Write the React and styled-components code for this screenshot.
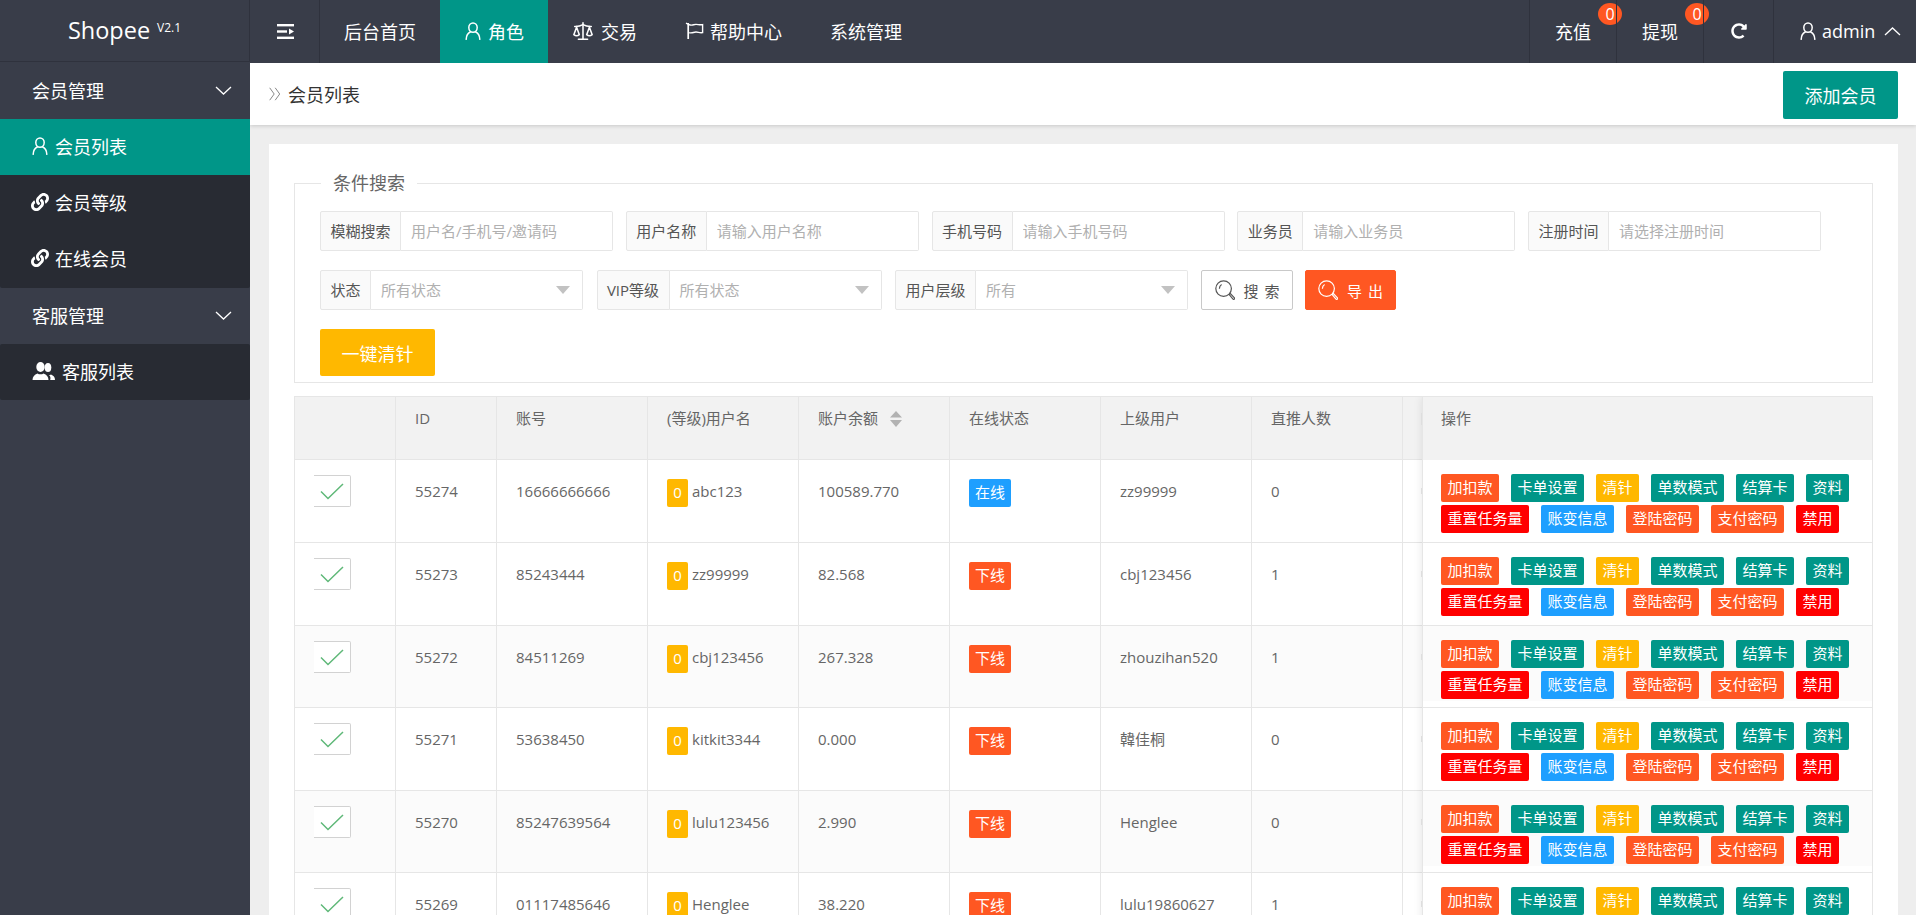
import React from 'react';
import styled, { createGlobalStyle } from 'styled-components';
import { FaLink, FaRedoAlt } from 'react-icons/fa';
import { Scale } from 'lucide-react';

const C = { dark: '#393D49', deep: '#282B33', teal: '#009688', orange: '#FF5722', yellow: '#FFB800', red: '#FF0000', blue: '#1E9FFF', line: '#e6e6e6' };

const Global = createGlobalStyle`
  html, body { margin: 0; padding: 0; height: 100%; overflow: hidden; }
  body { font-family: "Open Sans", "Noto Sans CJK SC", sans-serif; background: #eeeeee; color: #666; }
  * { box-sizing: border-box; }
`;

const Page = styled.div`display: flex; flex-direction: column; height: 100vh; overflow: hidden;`;
const TopBar = styled.header`display: flex; height: 63px; flex: none; background: ${C.dark}; color: #fff; font-size: 18px;`;
const Logo = styled.div`
  width: 250px; height: 62px; flex: none; display: flex; align-items: flex-start; justify-content: center;
  border-right: 1px solid #2f323d; border-bottom: 1px solid #2f323d; padding: 13px 0 0 0; font-size: 23.5px; line-height: 34px;
  sup { font-size: 12px; line-height: 12px; margin: 9px 0 0 7px; }
`;
const MenuToggle = styled.div`width: 70px; flex: none; display: flex; align-items: center; justify-content: center; border-right: 1px solid #2f323d; padding-left: 1px;`;
const NavItem = styled.div`
  height: 63px; padding: 0 24px 1px; display: flex; align-items: center; gap: ${p => p.$gap || 6}px;
  background: ${p => p.$active ? C.teal : 'transparent'};
`;
const NavRight = styled.div`margin-left: auto; display: flex;`;
const RightItem = styled.div`
  position: relative; width: ${p => p.$w}px; display: flex; align-items: center; justify-content: ${p => p.$center ? 'center' : 'flex-start'};
  border-left: 1px solid #2f323d; padding: 0 0 1px ${p => p.$center ? 0 : 25}px;
`;
const Dot = styled.span`
  position: absolute; left: 68px; top: 3px; width: 24px; height: 22px; border-radius: 50%; background: ${C.orange};
  font-size: 16px; line-height: 22px; text-align: center; color: #fff;
`;
const AdminName = styled.span`margin: 0 9px 0 5px;`;

const Body = styled.div`display: flex; flex: 1; min-height: 0;`;
const Side = styled.aside`width: 250px; flex: none; background: ${C.dark}; color: #fff; font-size: 18px;`;
const SideHead = styled.div`height: 56px; display: flex; align-items: center; justify-content: space-between; padding: 0 18px 2px 32px;`;
const SidePanel = styled.div`background: ${C.deep}; border-radius: 2px; padding-bottom: ${p => p.$tail || 0}px;`;
const SideLink = styled.div`
  height: 56px; display: flex; align-items: center; gap: ${p => p.$gap || 6}px; padding: 0 0 2px ${p => p.$pad || 31}px;
  background: ${p => p.$active ? C.teal : 'transparent'};
`;

const Main = styled.main`flex: 1; min-width: 0; display: flex; flex-direction: column; overflow: hidden;`;
const Crumbs = styled.div`
  height: 62px; flex: none; background: #fff; box-shadow: 0 1px 4px rgba(0,0,0,.16);
  display: flex; align-items: center; padding: 0 18px 0 19px; color: #333; font-size: 18px; gap: 7px; position: relative;
`;
const AddButton = styled.button`
  margin: 2px 0 0 auto; width: 115px; height: 48px; border: 0; border-radius: 2px; background: ${C.teal}; color: #fff;
  font: inherit; font-size: 18px; padding: 0;
`;
const Card = styled.section`flex: 1; min-height: 0; margin: 19px 18px 0 19px; background: #fff; padding: 28px 25px 0; overflow: hidden;`;
const FilterBox = styled.fieldset`margin: 0; border: 1px solid ${C.line}; padding: 17px 25px 6px; min-width: 0;`;
const FilterTitle = styled.legend`margin-left: 1px; padding: 0 12px; font-size: 18px; line-height: 22px; color: #666;`;
const FilterRow = styled.div`display: flex; gap: ${p => p.$gap}px; margin-bottom: 19px; &:last-child { margin-bottom: 0; }`;
const Field = styled.div`display: flex; height: 40px; font-size: 15px;`;
const FieldLabel = styled.label`
  width: ${p => p.$w}px; flex: none; display: flex; align-items: center; justify-content: center; background: #fafafa; color: #555;
  border: 1px solid ${C.line}; border-radius: 2px 0 0 2px; white-space: nowrap; padding-bottom: 1px;
`;
const TextInput = styled.input`
  width: 212px; height: 40px; border: 1px solid ${C.line}; border-left: 0; border-radius: 0 2px 2px 0; padding: 0 10px 1px; outline: 0;
  font: inherit; font-size: 15px; background: #fff;
  &::placeholder { color: #b0b0b0; opacity: 1; }
`;
const SelectBox = styled.div`
  width: 212px; height: 40px; border: 1px solid ${C.line}; border-left: 0; border-radius: 0 2px 2px 0; padding: 0 10px 1px;
  display: flex; align-items: center; justify-content: space-between; color: #b0b0b0; position: relative;
  &::after { content: ''; border: 7px solid transparent; border-top: 8px solid #c2c2c2; border-bottom: 0; margin-right: 2px; }
`;
const ButtonGroup = styled.div`display: flex; gap: 12px; margin-left: -0.5px;`;
const ToolButton = styled.button`
  width: ${p => p.$w || 92}px; height: 40px; padding: 0; border-radius: 2px; display: flex; align-items: center; justify-content: center; gap: 9px;
  font: inherit; font-size: 15px; word-spacing: 2px; color: ${p => p.$solid ? '#fff' : '#555'};
  background: ${p => p.$solid ? C.orange : '#fff'}; border: 1px solid ${p => p.$solid ? C.orange : '#c9c9c9'};
`;
const ClearButton = styled.button`
  width: 115px; height: 47px; border: 0; border-radius: 2px; background: ${C.yellow}; color: #fff; font: inherit; font-size: 18px; padding: 0;
`;

const Table = styled.div`position: relative; margin-top: 13px; border: 1px solid ${C.line}; border-bottom: 0; overflow: hidden; height: 600px;`;
const cols = '101px 101px repeat(6, 151px) 200px';
const HeadRow = styled.div`display: grid; grid-template-columns: ${cols}; height: 63px; background: #f2f2f2; border-bottom: 1px solid ${C.line};`;
const HeadCell = styled.div`display: flex; align-items: flex-start; gap: 12px; padding: 7px 0 0 19px; border-right: 1px solid ${C.line}; font-size: 15px; line-height: 28px; color: #666; white-space: nowrap; overflow: hidden;`;
const Row = styled.div`display: grid; grid-template-columns: ${cols}; height: ${p => p.$h}px; background: ${p => p.$stripe ? '#fbfbfb' : '#fff'}; border-bottom: 1px solid ${C.line};`;
const Cell = styled.div`display: flex; align-items: flex-start; padding: 19px 0 0 19px; border-right: 1px solid ${C.line}; font-size: 15px; line-height: 25px; color: #666; white-space: nowrap; overflow: hidden;`;
const CheckCell = styled.div`padding: 15px 0 0 19px; border-right: 1px solid ${C.line};`;
const CheckBox = styled.div`
  width: 37px; height: 32px; background: #fff; border: 1px solid #d2d2d2; border-left: 0; border-radius: 0 2px 2px 0; display: flex; align-items: center; padding-left: 6px;
`;
const Chip = styled.span`
  display: inline-block; height: 28px; line-height: 27px; padding: 0 ${p => p.$pad || 6.5}px; border-radius: 2px; color: #fff; font-size: 15px; background: ${p => p.$bg};
`;
const Level = styled(Chip)`width: 21px; padding: 0; text-align: center; margin-right: 4px;`;
const HiddenColumnEdge = styled.span`display: block; width: 1px; height: ${p => p.$h}px; margin: ${p => p.$top}px 0 0 18px; background: #e8e8e8;`;
const Fixed = styled.div`
  position: absolute; top: 0; right: 0; width: 450px; background: #fff; border-left: 1px solid ${C.line}; box-shadow: -1px 0 8px rgba(0,0,0,.08);
`;
const FixedHead = styled.div`height: 63px; background: #f2f2f2; padding: 7px 0 0 18px; font-size: 15px; line-height: 28px; color: #666;`;
const ActionRow = styled.div`
  height: ${p => p.$h}px; padding: 14px 0 0 18px; border-bottom: 1px solid ${C.line};
  background: linear-gradient(${p => p.$stripe ? '#fbfbfb' : '#fff'}, ${p => p.$stripe ? '#fbfbfb' : '#fff'}) no-repeat top / 100% calc(100% - 6px);
`;
const ActionLine = styled.div`display: flex; gap: 12px; margin-bottom: 3px;`;

const Person = ({ size = 18 }) => (
  <svg width={size} height={size} viewBox="0 0 18 18" fill="none" stroke="currentColor" strokeWidth="1.5" strokeLinecap="round">
    <ellipse cx="9" cy="5.6" rx="4.2" ry="4.7" />
    <path d="M6.3 10c-2.6 1.2-4 3.9-4.1 7.3M11.7 10c2.6 1.2 4 3.9 4.1 7.3" />
  </svg>
);
const Chevron = ({ up }) => (
  <svg width="17" height="9" viewBox="0 0 17 9" fill="none" stroke="currentColor" strokeWidth="1.3" style={up ? { transform: 'rotate(180deg)' } : undefined}>
    <path d="M1 1l7.5 7L16 1" />
  </svg>
);
const Toggle = () => (
  <svg width="17" height="15" viewBox="0 0 17 15" fill="#fff">
    <rect width="17" height="2.4" /><rect y="6.3" width="10" height="2.4" /><rect y="12.6" width="17" height="2.4" />
    <path d="M12 4.6l5 2.9-5 2.9z" />
  </svg>
);
const Flag = () => (
  <svg width="20" height="18" viewBox="0 0 20 18" fill="none" stroke="currentColor" strokeWidth="1.4">
    <path d="M3.2 1v16" strokeWidth="1.7" />
    <path d="M1 1.2l3 1.4c3 1.4 4.6-.2 7-.2 2 0 4 .8 6.6.2v8c-2.6.6-4.6-.6-6.6-.6-2.4 0-4 1.6-6.8.6" />
  </svg>
);
const Arrows = () => (
  <svg width="12" height="14" viewBox="0 0 12 14" fill="none" stroke="#888" strokeWidth="1">
    <path d="M.7.8L5.2 7 .7 13.2M6.2.8L10.7 7l-4.5 6.2" />
  </svg>
);
const Search = () => (
  <svg width="20" height="20" viewBox="0 0 20 20" fill="none" stroke="currentColor" strokeWidth="1.2">
    <circle cx="8.6" cy="8.6" r="7.8" />
    <path d="M4.4 8.8c0-2 .8-3.4 2.2-4.2" />
    <path d="M14.2 14.6l1.2-1 4 4.2c.4.5.3 1-.1 1.3-.4.4-.9.4-1.3 0z" />
  </svg>
);
const Check = () => (
  <svg width="24" height="17" viewBox="0 0 24 17" fill="none" stroke="#5FB878" strokeWidth="1.5"><path d="M1 8.5l7 7L23 1" /></svg>
);
const Sort = () => (
  <svg width="12" height="16" viewBox="0 0 12 16" fill="#b2b2b2" style={{ marginTop: 7 }}><path d="M6 0l6 6.5H0zM0 9h12l-6 7z" /></svg>
);
const Friends = () => (
  <svg width="23" height="18" viewBox="0 0 23 18" fill="#fff">
    <ellipse cx="8.5" cy="5" rx="4.2" ry="5" />
    <path d="M.5 18c0-3.6 2-5.2 5-6.6 1.6 1.2 4.400 1.200 6 0 3 1.400 5 3 5 6.600z" />
    <ellipse cx="16" cy="5.600" rx="3.300" ry="4.500" />
    <path d="M18.200 18H23c0-3-1.500-4.600-4-5.600-.7.500-1.300.700-2 .7 1.500 1.300 1.800 3 1.200 4.900z" />
  </svg>
);

const actionsA = [['加扣款', C.orange], ['卡单设置', C.teal], ['清针', C.yellow], ['单数模式', C.teal], ['结算卡', C.teal], ['资料', C.teal]];
const actionsB = [['重置任务量', C.red], ['账变信息', C.blue], ['登陆密码', C.orange], ['支付密码', C.orange], ['禁用', C.red]];

const rows = [
  { h: 83, id: '55274', acct: '16666666666', name: 'abc123', bal: '100589.770', on: true, up: 'zz99999', n: '0' },
  { h: 83, id: '55273', acct: '85243444', name: 'zz99999', bal: '82.568', up: 'cbj123456', n: '1' },
  { h: 82, stripe: true, id: '55272', acct: '84511269', name: 'cbj123456', bal: '267.328', up: 'zhouzihan520', n: '1' },
  { h: 83, id: '55271', acct: '53638450', name: 'kitkit3344', bal: '0.000', up: '韓佳桐', n: '0' },
  { h: 82, stripe: true, id: '55270', acct: '85247639564', name: 'lulu123456', bal: '2.990', up: 'Henglee', n: '0' },
  { h: 83, id: '55269', acct: '01117485646', name: 'Henglee', bal: '38.220', up: 'lulu19860627', n: '1' },
];

const Actions = ({ list }) => (
  <ActionLine>{list.map(([t, c]) => <Chip key={t} $bg={c}>{t}</Chip>)}</ActionLine>
);

export default function App() {
  return (
    <Page>
      <Global />
      <TopBar>
        <Logo><span>Shopee</span><sup>V2.1</sup></Logo>
        <MenuToggle><Toggle /></MenuToggle>
        <NavItem>后台首页</NavItem>
        <NavItem $active><Person />角色</NavItem>
        <NavItem $gap={7}><Scale size={22} strokeWidth={1.7} />交易</NavItem>
        <NavItem $gap={5}><Flag />帮助中心</NavItem>
        <NavItem>系统管理</NavItem>
        <NavRight>
          <RightItem $w={87}>充值<Dot>0</Dot></RightItem>
          <RightItem $w={87}>提现<Dot>0</Dot></RightItem>
          <RightItem $w={70} $center><FaRedoAlt size={16} /></RightItem>
          <RightItem $w={143}><Person /><AdminName>admin</AdminName><Chevron up /></RightItem>
        </NavRight>
      </TopBar>
      <Body>
        <Side>
          <SideHead>会员管理<Chevron /></SideHead>
          <SidePanel $tail={1}>
            <SideLink $active><Person />会员列表</SideLink>
            <SideLink><FaLink size={18} />会员等级</SideLink>
            <SideLink><FaLink size={18} />在线会员</SideLink>
          </SidePanel>
          <SideHead>客服管理<Chevron /></SideHead>
          <SidePanel>
            <SideLink $pad={32} $gap={7}><Friends />客服列表</SideLink>
          </SidePanel>
        </Side>
        <Main>
          <Crumbs>
            <Arrows />会员列表
            <AddButton>添加会员</AddButton>
          </Crumbs>
          <Card>
            <FilterBox>
              <FilterTitle>条件搜索</FilterTitle>
              <FilterRow $gap={12.75}>
                <Field><FieldLabel $w={81}>模糊搜索</FieldLabel><TextInput placeholder="用户名/手机号/邀请码" /></Field>
                <Field><FieldLabel $w={81}>用户名称</FieldLabel><TextInput placeholder="请输入用户名称" /></Field>
                <Field><FieldLabel $w={81}>手机号码</FieldLabel><TextInput placeholder="请输入手机号码" /></Field>
                <Field><FieldLabel $w={66}>业务员</FieldLabel><TextInput placeholder="请输入业务员" /></Field>
                <Field><FieldLabel $w={81}>注册时间</FieldLabel><TextInput placeholder="请选择注册时间" /></Field>
              </FilterRow>
              <FilterRow $gap={13.5}>
                <Field><FieldLabel $w={51}>状态</FieldLabel><SelectBox>所有状态</SelectBox></Field>
                <Field><FieldLabel $w={73}>VIP等级</FieldLabel><SelectBox>所有状态</SelectBox></Field>
                <Field><FieldLabel $w={81}>用户层级</FieldLabel><SelectBox>所有</SelectBox></Field>
                <ButtonGroup>
                  <ToolButton><Search />搜 索</ToolButton>
                  <ToolButton $solid $w={91}><Search />导 出</ToolButton>
                </ButtonGroup>
              </FilterRow>
              <FilterRow>
                <ClearButton>一键清针</ClearButton>
              </FilterRow>
            </FilterBox>
            <Table>
              <HeadRow>
                <HeadCell />
                <HeadCell>ID</HeadCell>
                <HeadCell>账号</HeadCell>
                <HeadCell>(等级)用户名</HeadCell>
                <HeadCell>账户余额<Sort /></HeadCell>
                <HeadCell>在线状态</HeadCell>
                <HeadCell>上级用户</HeadCell>
                <HeadCell>直推人数</HeadCell>
                <div><HiddenColumnEdge $h={12} $top={16} /></div>
              </HeadRow>
              {rows.map(r => (
                <Row key={r.id} $h={r.h} $stripe={r.stripe}>
                  <CheckCell><CheckBox><Check /></CheckBox></CheckCell>
                  <Cell>{r.id}</Cell>
                  <Cell>{r.acct}</Cell>
                  <Cell><Level $bg={C.yellow}>0</Level>{r.name}</Cell>
                  <Cell>{r.bal}</Cell>
                  <Cell><Chip $pad={6} $bg={r.on ? C.blue : C.orange}>{r.on ? '在线' : '下线'}</Chip></Cell>
                  <Cell>{r.up}</Cell>
                  <Cell>{r.n}</Cell>
                  <div><HiddenColumnEdge $h={6} $top={28} /></div>
                </Row>
              ))}
              <Fixed>
                <FixedHead>操作</FixedHead>
                {rows.map(r => (
                  <ActionRow key={r.id} $h={r.h} $stripe={r.stripe}>
                    <Actions list={actionsA} />
                    <Actions list={actionsB} />
                  </ActionRow>
                ))}
              </Fixed>
            </Table>
          </Card>
        </Main>
      </Body>
    </Page>
  );
}
